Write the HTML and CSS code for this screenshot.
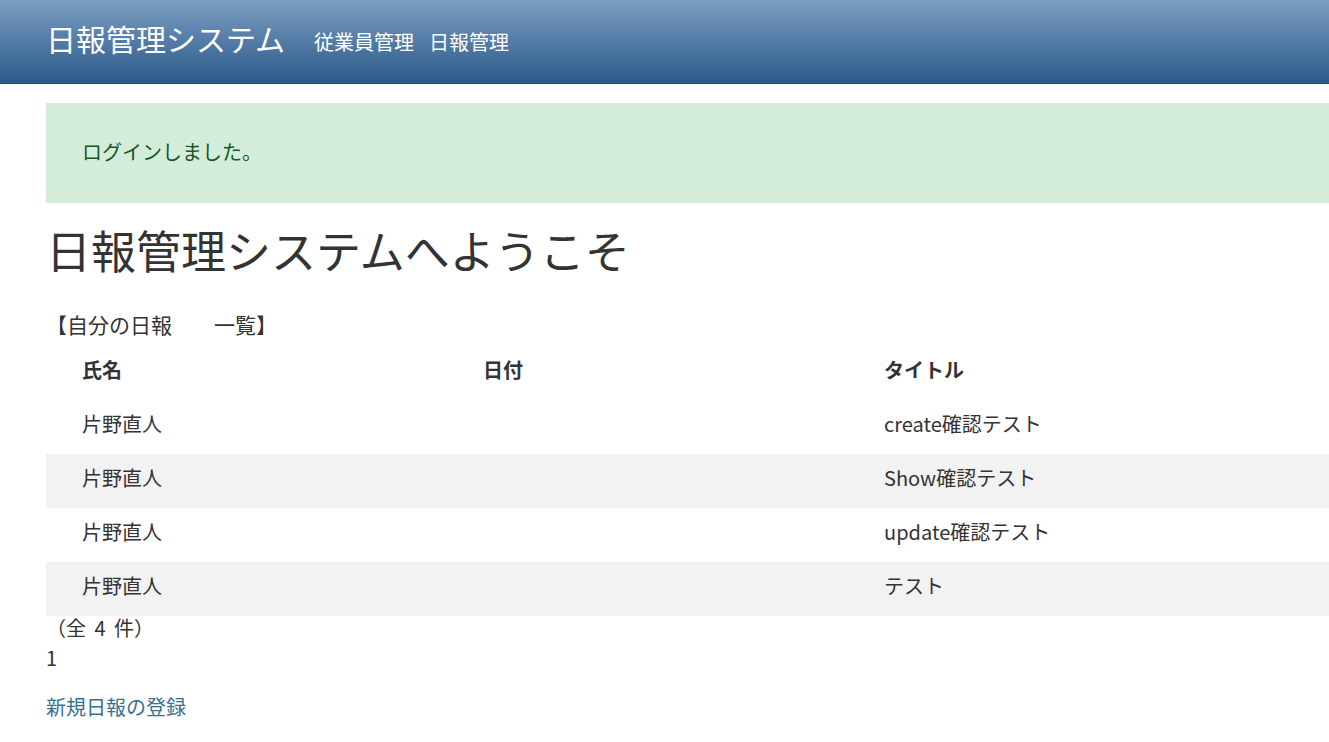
FILE: index.html
```html
<!DOCTYPE html>
<html lang="ja">
<head>
<meta charset="utf-8">
<title>日報管理システム</title>
<link rel="stylesheet" href="styles.css">
</head>
<body>
<header class="header">
  <h1 class="brand">日報管理システム</h1>
  <nav class="nav">
    <a class="nav-link" href="#">従業員管理</a>
    <a class="nav-link" href="#">日報管理</a>
  </nav>
</header>
<main class="content">
  <div class="flash">ログインしました。</div>
  <h2 class="welcome">日報管理システムへようこそ</h2>
  <h3 class="section-title">【自分の日報　　一覧】</h3>
  <table class="report-list">
    <colgroup>
      <col class="col-name">
      <col class="col-date">
      <col class="col-title">
    </colgroup>
    <thead>
      <tr><th>氏名</th><th>日付</th><th>タイトル</th></tr>
    </thead>
    <tbody>
      <tr class="row-odd"><td>片野直人</td><td></td><td>create確認テスト</td></tr>
      <tr class="row-even"><td>片野直人</td><td></td><td>Show確認テスト</td></tr>
      <tr class="row-odd"><td>片野直人</td><td></td><td>update確認テスト</td></tr>
      <tr class="row-even"><td>片野直人</td><td></td><td>テスト</td></tr>
    </tbody>
  </table>
  <div class="count">（全 4 件）</div>
  <div class="pagination">1</div>
  <p class="new-link"><a href="#">新規日報の登録</a></p>
</main>
</body>
</html>
```

FILE: styles.css
```css
html, body {
  margin: 0;
  padding: 0;
}
body {
  font-family: "Noto Sans CJK JP", "Noto Sans", sans-serif;
  font-size: 20px;
  color: #333333;
  background: #ffffff;
  overflow: hidden;
}
.header {
  height: 84px;
  display: flex;
  align-items: center;
  padding-left: 46px;
  background: linear-gradient(to bottom, #7c9ec0 0%, #5b82ab 40%, #2a5a8a 100%);
  border-bottom: 1px solid #274d75;
  box-sizing: border-box;
}
.brand {
  margin: 0;
  padding-bottom: 8px;
  font-size: 30px;
  font-weight: normal;
  line-height: 40px;
  color: #ffffff;
}
.nav {
  display: flex;
  gap: 15px;
  margin-left: 29px;
}
.nav-link {
  color: #ffffff;
  text-decoration: none;
  font-size: 20px;
  line-height: 30px;
}
.content {
  padding-left: 46px;
}
.flash {
  margin-top: 19px;
  height: 100px;
  box-sizing: border-box;
  padding: 0 0 4px 36px;
  display: flex;
  align-items: center;
  background: #d4edda;
  color: #155724;
  font-size: 20px;
}
.welcome {
  margin: 17px 0 0;
  font-size: 45px;
  font-weight: normal;
  line-height: 60px;
}
.section-title {
  margin: 29px 0 0;
  font-size: 21px;
  font-weight: normal;
  line-height: 30px;
}
.report-list {
  margin-top: 7px;
  width: 100%;
  border-collapse: collapse;
  table-layout: fixed;
}
.col-name, .col-date {
  width: 401px;
}
.report-list th,
.report-list td {
  height: 54px;
  box-sizing: border-box;
  padding: 0 0 6px 36px;
  text-align: left;
  vertical-align: middle;
  font-size: 20px;
  line-height: 30px;
}
.report-list th {
  font-weight: bold;
}
.row-even {
  background: #f2f2f2;
}
.count {
  line-height: 24px;
  padding-bottom: 4px;
  word-spacing: 4px;
}
.pagination {
  line-height: 28px;
  padding-bottom: 2px;
}
.new-link {
  margin: 19px 0 0;
  line-height: 28px;
  padding-bottom: 2px;
}
.new-link a {
  color: #38718f;
  text-decoration: none;
}
```
